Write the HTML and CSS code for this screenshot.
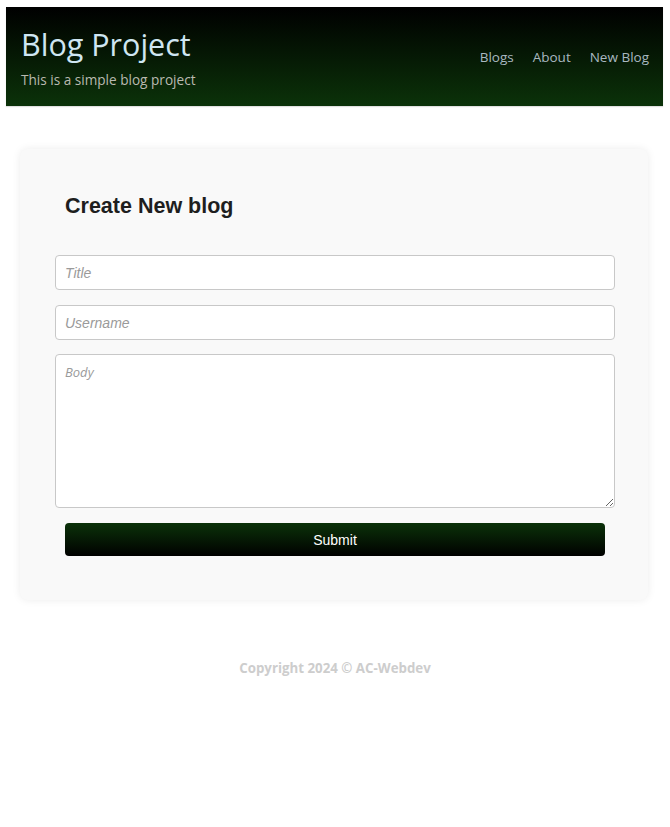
FILE: index.html
```html
<!DOCTYPE html>
<html lang="en">
<head>
<meta charset="utf-8">
<title>Blog Project</title>
<link rel="stylesheet" href="styles.css">
</head>
<body>
<header class="site-header">
  <div class="brand">
    <h1 class="brand-title">Blog Project</h1>
    <p class="brand-sub">This is a simple blog project</p>
  </div>
  <nav class="nav">
    <a href="#">Blogs</a>
    <a href="#">About</a>
    <a href="#">New Blog</a>
  </nav>
</header>
<main class="main">
  <section class="card">
    <h2 class="card-title">Create New blog</h2>
    <form class="form">
      <input class="field" type="text" placeholder="Title">
      <input class="field field-tight" type="text" placeholder="Username">
      <textarea class="field area" placeholder="Body"></textarea>
      <button class="submit" type="button">Submit</button>
    </form>
  </section>
</main>
<footer class="footer">Copyright 2024 © AC-Webdev</footer>
</body>
</html>
```
FILE: styles.css
```css
* { box-sizing: border-box; }
body {
  margin: 0;
  background: #fff;
  font-family: "Liberation Sans", Arial, sans-serif;
}
.site-header {
  margin: 7px 7px 0 6px;
  height: 99px;
  background: linear-gradient(to bottom, #000000, #0b3209);
  display: flex;
  align-items: center;
  justify-content: space-between;
  padding: 0 14px 0 15px;
  box-shadow: 0 1px 1px rgba(0,0,0,0.12);
  font-family: "Open Sans", sans-serif;
}
.brand { margin-top: 0; }
.brand-title {
  margin: 0;
  font-size: 30.5px;
  font-weight: 400;
  color: #cfe6f2;
  line-height: 38px;
  letter-spacing: 0;
}
.brand-sub {
  margin: 7px 0 0;
  font-size: 13.6px;
  color: #b9b9b0;
}
.nav { display: flex; gap: 19px; margin-top: 0; }
.nav a {
  color: #a9b8c0;
  text-decoration: none;
  font-size: 13.5px;
}
.main { padding: 43px 22px 0 20px; }
.card {
  background: #f9f9f9;
  border-radius: 8px;
  box-shadow: 0 0 8px rgba(0,0,0,0.08);
  padding: 44px 33px 44px 35px;
}
.card-title {
  margin: 0 0 36px 10px;
  font-size: 21.5px;
  font-weight: 700;
  color: #1e1e1e;
  line-height: 26px;
}
.form { display: flex; flex-direction: column; }
.field {
  width: 100%;
  height: 35px;
  border: 1px solid #c8c8c8;
  border-radius: 4px;
  background: #fff;
  padding: 0 9px;
  font-family: "Liberation Sans", Arial, sans-serif;
  font-size: 14px;
  margin-bottom: 15px;
}
.field-tight { margin-bottom: 14px; }
.field::placeholder { color: #9a9a9a; font-style: italic; }
.area {
  height: 154px;
  padding: 8px 9px;
  resize: vertical;
  font-family: "Open Sans", sans-serif;
  font-size: 13px;
  margin-bottom: 15px;
}
.submit {
  margin: 0 10px;
  height: 33px;
  border: none;
  border-radius: 4px;
  background: linear-gradient(to bottom, #0b3209, #000000);
  color: #fff;
  font-family: "Liberation Sans", Arial, sans-serif;
  font-size: 14px;
}
.footer {
  margin-top: 59px;
  text-align: center;
  color: #cdcdcd;
  font-family: "Open Sans", sans-serif;
  font-weight: 700;
  font-size: 13.3px;
}
```
